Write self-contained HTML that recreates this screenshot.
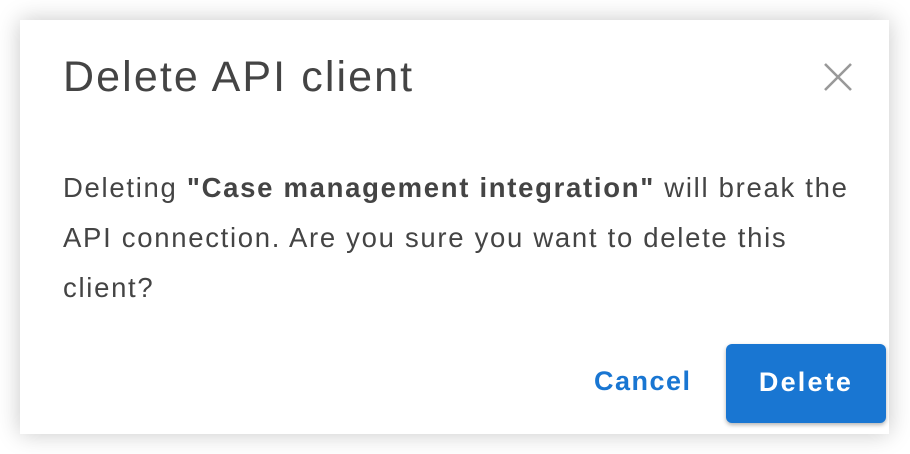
<!DOCTYPE html>
<html><head><meta charset="utf-8"><style>
html,body{margin:0;padding:0;background:#fff;width:910px;height:454px;overflow:hidden;font-family:"Liberation Sans",sans-serif}
.dlg{position:absolute;left:20px;top:20px;width:869px;height:414px;background:#fff;box-shadow:0 0 22px rgba(0,0,0,0.22)}
.t{position:absolute;left:63px;top:53px;font-size:43px;color:#444;white-space:nowrap;letter-spacing:2.1px}
.x{position:absolute;left:822px;top:61px}
.b{position:absolute;left:63px;top:163px;font-size:27.5px;line-height:50px;color:#444;white-space:nowrap;letter-spacing:1.7px}
.c{position:absolute;left:594px;top:366px;font-size:27px;font-weight:bold;color:#1976d2;letter-spacing:1.5px}
.d{position:absolute;left:726px;top:344px;width:160px;height:79px;background:#1976d2;border-radius:6px;box-shadow:0 2px 4px rgba(0,0,0,0.3);color:#fff;font-size:27px;font-weight:bold;text-align:center;line-height:77px;letter-spacing:2.2px}
</style></head><body>
<div class="dlg"></div>
<div class="t">Delete API client</div>
<svg class="x" width="32" height="32" viewBox="0 0 32 32"><path d="M3 3L29 29M29 3L3 29" stroke="#999" stroke-width="2.6"/></svg>
<div class="b">Deleting <b>"Case management integration"</b> will break the<br>API connection. Are you sure you want to delete this<br>client?</div>
<div class="c">Cancel</div>
<div class="d">Delete</div>
</body></html>
